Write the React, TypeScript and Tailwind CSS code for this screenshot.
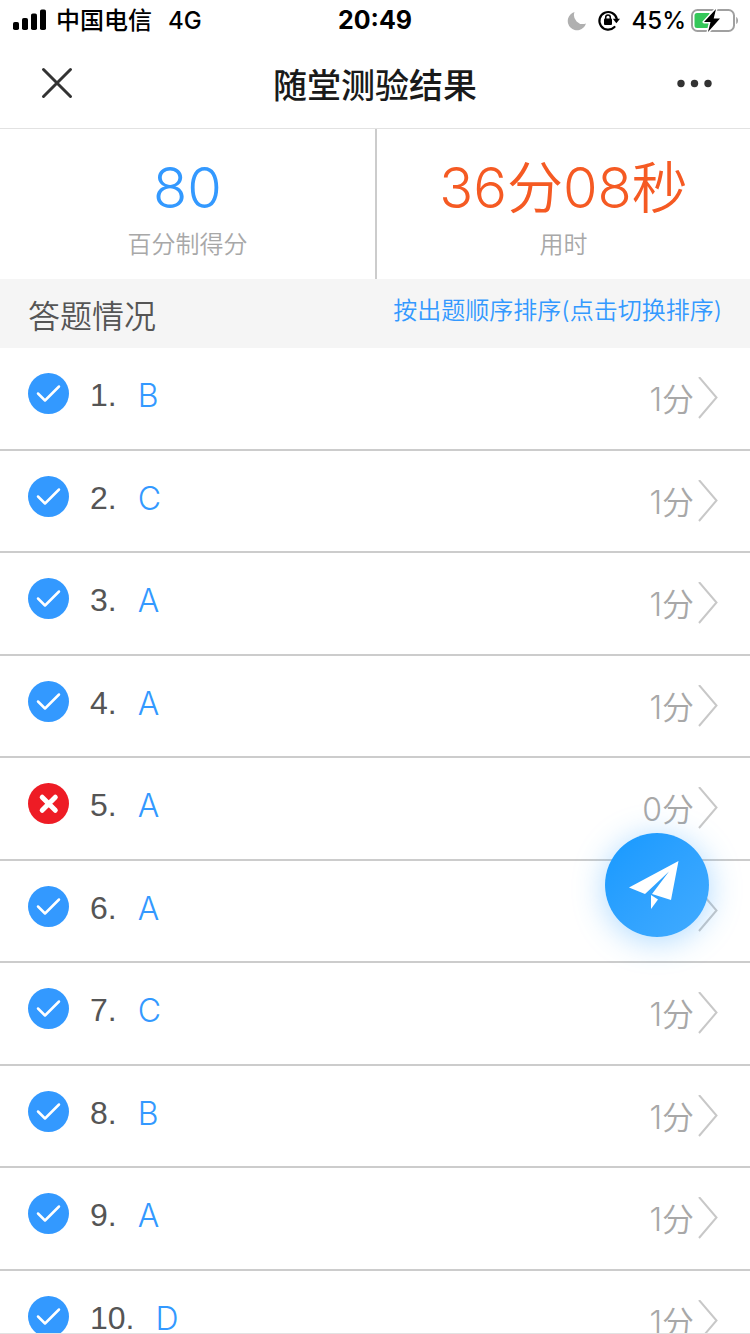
import { useState } from "react";

type Answer = {
    id: number;
    choice: string;
    score: number;
};

const answers: Answer[] = [
    { id: 1, choice: "B", score: 1 },
    { id: 2, choice: "C", score: 1 },
    { id: 3, choice: "A", score: 1 },
    { id: 4, choice: "A", score: 1 },
    { id: 5, choice: "A", score: 0 },
    { id: 6, choice: "A", score: 1 },
    { id: 7, choice: "C", score: 1 },
    { id: 8, choice: "B", score: 1 },
    { id: 9, choice: "A", score: 1 },
    { id: 10, choice: "D", score: 1 },
];

function BatteryIcon() {
    return (
        <svg className="h-6 w-12" viewBox="0 0 48 24" fill="none">
            <rect x="2" y="1" width="42" height="21" rx="5.5" stroke="#a0a0a0" strokeWidth="2" />
            <path d="M46.2 8c2.4 1 2.4 6 0 7z" fill="#a0a0a0" />
            <path d="M7 4h12.5v15H7a2.500 2.500 0 0 1-2.500-2.500V6.500A2.500 2.500 0 0 1 7 4z" fill="#34c759" />
            <path
                d="M26 0L14 13H20.500L18 23L30 9.500H23.700z"
                fill="#000"
                stroke="#fff"
                strokeWidth="3"
                strokeLinejoin="round"
                paintOrder="stroke"
            />
        </svg>
    );
}

function StatusBar() {
    return (
        <div className="grid h-10 grid-cols-3 items-center px-3 pt-0.5 text-2xl font-medium text-black">
            <div className="flex items-center gap-2">
                <svg className="h-6 w-9 shrink-0" viewBox="0 0 36 24">
                    <rect x="1" y="13" width="6" height="8" rx="1.8" />
                    <rect x="10" y="9" width="6" height="12" rx="1.8" />
                    <rect x="19" y="4.5" width="6" height="16.5" rx="1.8" />
                    <rect x="28" y="0.5" width="6" height="20.5" rx="1.8" />
                </svg>
                <span className="whitespace-nowrap">中国电信</span>
                <span className="ml-2">4G</span>
            </div>
            <span className="text-center text-[25px] font-bold">20:49</span>
            <div className="flex items-center justify-end gap-1">
                <svg className="mr-1.5 size-5 shrink-0" viewBox="0 0 20 20">
                    <path d="M8.5 1A9 9 0 0 0 20 12.5A9.3 9.3 0 1 1 8.5 1z" fill="#b0b0b0" />
                </svg>
                <svg className="size-6 shrink-0" viewBox="0 0 24 24" fill="none">
                    <path d="M18.5 18A8.8 8.8 0 1 1 20.8 10" stroke="#000" strokeWidth="2.2" strokeLinecap="round" />
                    <path d="M16.8 9.8h7.2l-3.6 4.4z" fill="#000" />
                    <rect x="8" y="9.5" width="8" height="6.5" rx="1" fill="#000" />
                    <path d="M9.7 10V8.3a2.3 2.3 0 0 1 4.6 0V10" stroke="#000" strokeWidth="1.5" />
                </svg>
                <span className="ml-2">45%</span>
                <BatteryIcon />
            </div>
        </div>
    );
}

function NavBar() {
    return (
        <header className="flex h-[89px] items-center justify-between border-b border-[#e2e2e2] px-9">
            <button type="button" aria-label="关闭">
                <svg className="size-10" viewBox="0 0 40 40" fill="none" stroke="#333" strokeWidth="3" strokeLinecap="round">
                    <path d="M7.5 5.5L34.5 32.5M34.5 5.5L7.5 32.5" />
                </svg>
            </button>
            <h1 className="pt-0.5 text-[34px] font-medium text-[#1a1a1a]">随堂测验结果</h1>
            <button type="button" aria-label="更多">
                <svg className="size-10" viewBox="0 0 40 40" fill="#333">
                    <circle cx="7" cy="19.5" r="3.7" />
                    <circle cx="20.5" cy="19.5" r="3.7" />
                    <circle cx="34" cy="19.5" r="3.7" />
                </svg>
            </button>
        </header>
    );
}

function ResultIcon({ correct }: { correct: boolean }) {
    return (
        <svg className="size-[41px] shrink-0" viewBox="0 0 41 41" fill="none" stroke="#fff" strokeLinecap="round" strokeLinejoin="round">
            <circle cx="20.5" cy="20.5" r="20.5" fill={correct ? "#3399ff" : "#ee1c25"} stroke="none" />
            {correct ? (
                <path d="M10 20.5L17 27.5L31 13.5" strokeWidth="2.5" />
            ) : (
                <path d="M14.2 14.2L27.3 27.3M27.3 14.2L14.2 27.3" strokeWidth="5" />
            )}
        </svg>
    );
}

function AnswerRow({ answer }: { answer: Answer }) {
    return (
        <li className="border-b-2 border-[#ccc] odd:pb-7 even:pb-[27px]">
            <button type="button" className="flex w-full items-start px-7 pt-[25px] text-left text-[32px] leading-[45px]">
                <ResultIcon correct={answer.score > 0} />
                <span className="ml-[21px] font-['Liberation_Sans',sans-serif] text-[#555]">{answer.id}.</span>
                <span className="ml-[21px] font-[350] text-[#3399ff]">{answer.choice}</span>
                <span className="mt-1 ml-auto h-10 font-[350] text-[#a8a8a8]">{answer.score}分</span>
                <svg className="mt-1 mr-1 ml-1 h-11 w-5" viewBox="0 0 20 44" fill="none" stroke="#c8c8c8" strokeWidth="2">
                    <path d="M1 0L18.5 20.500L1 41" />
                </svg>
            </button>
        </li>
    );
}

export default function App() {
    const [reversed, setReversed] = useState(false);
    const list = reversed ? [...answers].reverse() : answers;

    return (
        <div className="flex h-screen flex-col overflow-hidden border-b border-[#e2e2e2] bg-white font-[Inter,'Noto_Sans_CJK_SC',sans-serif]">
            <StatusBar />
            <NavBar />
            <section className="grid grid-cols-2 text-center font-[350]">
                <div className="flex h-[150px] flex-col items-center pt-6">
                    <p className="text-[56px] leading-[70px] text-[#3399ff]">80</p>
                    <p className="mt-1 text-2xl leading-9 text-[#a8a8a8]">百分制得分</p>
                </div>
                <div className="flex h-[150px] flex-col items-center border-l-2 border-[#ccc] pt-6">
                    <p className="text-[56px] leading-[70px] text-[#f55a23]">36分08秒</p>
                    <p className="mt-1 text-2xl leading-9 text-[#a8a8a8]">用时</p>
                </div>
            </section>
            <div className="flex h-[69px] shrink-0 items-start justify-between bg-[#f5f5f5] px-7 pt-3 font-[350]">
                <h2 className="text-[32px] leading-13 text-[#555]">答题情况</h2>
                <button type="button" className="text-2xl leading-10 text-[#3399ff]" onClick={() => setReversed(!reversed)}>
                    按出题顺序排序(点击切换排序)
                </button>
            </div>
            <ul className="min-h-0 flex-1 overflow-y-auto [scrollbar-width:none]">
                {list.map((answer) => (
                    <AnswerRow key={answer.id} answer={answer} />
                ))}
            </ul>
            <button
                type="button"
                aria-label="发送"
                className="fixed right-[41px] bottom-[397px] size-26 rounded-full bg-linear-to-br from-[#1499ff] to-[#41abff] shadow-[0_4px_32px_rgba(51,160,255,0.4)]"
            >
                <svg className="size-26" viewBox="0 0 104 104" fill="#fff">
                    <path d="M73.5 28L24 54.5L40 61L64 38.5L47 61L66 67z" />
                    <path d="M46 62L53 66.5L46 76z" />
                </svg>
            </button>
        </div>
    );
}
